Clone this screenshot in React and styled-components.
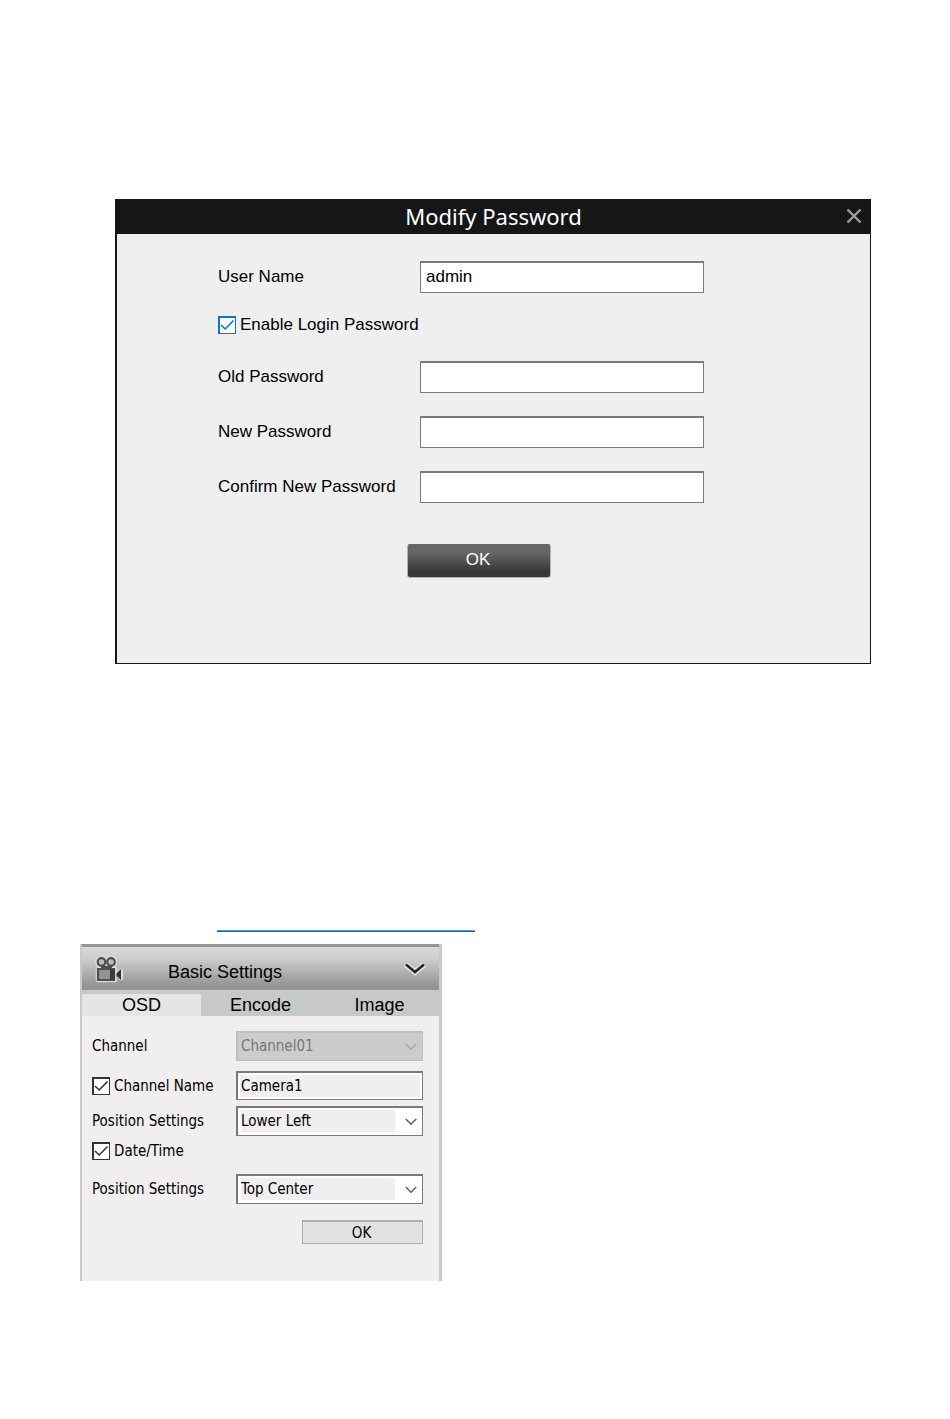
import React from "react";
import styled, { createGlobalStyle } from "styled-components";

const GlobalStyle = createGlobalStyle`
  * {
    box-sizing: border-box;
  }

  body {
    margin: 0;
    background: #fff;
    color: #000;
    font-family: "Liberation Sans", Arial, sans-serif;
  }

  button, input, select {
    margin: 0;
    border-radius: 0;
    font: inherit;
    color: inherit;
  }
`;

const Page = styled.main`
  padding: 199px 79px 137px 80px;
`;

const Dialog = styled.section`
  margin-left: 35px;
  border: 1px solid #161618;
  border-left-width: 2px;
  border-top: 0;
  background: #efefef;
  font-size: 17px;
`;

const DialogHeader = styled.header`
  display: grid;
  grid-template-columns: 32px 1fr 32px;
  align-items: center;
  height: 35px;
  padding-bottom: 2px;
  background: #161618;
`;

const DialogTitle = styled.h1`
  grid-column: 2;
  margin: 0;
  color: #fff;
  font: 400 22px/32px "Noto Sans", sans-serif;
  text-align: center;
`;

const CloseButton = styled.button`
  display: flex;
  justify-content: center;
  padding: 0;
  border: 0;
  background: none;
  color: #a0a0a0;
  cursor: pointer;
`;

const PasswordForm = styled.form`
  display: flex;
  flex-direction: column;
  gap: 23px;
  padding: 27px 101px 85px;
`;

const Field = styled.div`
  display: grid;
  grid-template-columns: 202px minmax(0, 284px);
  align-items: center;
`;

const TextInput = styled.input`
  width: 100%;
  height: 32px;
  padding: 0 5px 2px;
  border: 1px solid #7a7a7a;
  border-top-width: 2px;
  background: #fff;
  outline: none;
`;

const CheckLabel = styled.label`
  display: flex;
  align-items: center;
  gap: 4px;
  color: ${props => props.$accent || "#333"};
  margin-bottom: ${props => (props.$accent ? "4px" : "0")};

  & > b {
    color: #000;
    font-weight: 400;
    line-height: 18px;
  }
`;

const CheckBox = styled.span`
  position: relative;
  width: 18px;
  height: 18px;

  & > input {
    display: block;
    width: 18px;
    height: 18px;
    appearance: none;
    border: 2px solid currentColor;
    border-right-width: 1px;
    border-bottom-width: 1px;
    background: #fff;
  }

  & > svg {
    position: absolute;
    inset: 0;
    visibility: hidden;
    pointer-events: none;
  }

  & > input:checked + svg {
    visibility: visible;
  }
`;

const SubmitButton = styled.button`
  width: 144px;
  height: 34px;
  margin: 18px 0 0 189px;
  padding: 0 2px 2px 0;
  border: 1px solid #b4b4b4;
  border-top-color: #6a6a6a;
  border-radius: 3px;
  background: linear-gradient(#666 25%, #383838 80%);
  color: #fff;
  cursor: pointer;
`;

const Divider = styled.hr`
  width: 258px;
  height: 2px;
  margin: 266px 0 12px 137px;
  border: 0;
  border-top: 1px solid #5b9bdc;
  background: #0563c1;
`;

const Panel = styled.section`
  max-width: 362px;
  border: solid #c8c9c9;
  border-width: 0 3px 0 2px;
  background: #f0eeef;
  font-family: "DejaVu Sans Condensed", "DejaVu Sans", sans-serif;
  font-size: 15px;
`;

const PanelHeader = styled.header`
  display: flex;
  align-items: center;
  height: 46px;
  padding: 0 12px 0 13px;
  border-top: 3px solid #949494;
  background: linear-gradient(#d8d8d8, #cfcfcf 25%, #949494 90%);
  font-family: "Liberation Sans", Arial, sans-serif;
`;

const PanelTitle = styled.h2`
  flex: 1;
  margin: 8px 0 0 43px;
  font-size: 18px;
  font-weight: 400;
`;

const ToggleButton = styled.button`
  display: flex;
  padding: 0;
  border: 0;
  background: none;
  cursor: pointer;
`;

const Tabs = styled.div`
  display: grid;
  grid-template-columns: repeat(3, 1fr);
  padding-top: 4px;
  background: #c6c9c8;
  font-family: "Liberation Sans", Arial, sans-serif;
`;

const Tab = styled.button`
  height: 22px;
  padding: 0;
  border: 0;
  background: ${props => (props.$active ? "#e5e5e5" : "transparent")};
  font-size: 18px;
  line-height: 22px;
  cursor: pointer;
`;

const Settings = styled.form`
  padding: 15px 16px 37px 10px;
`;

const SettingRow = styled.div`
  display: grid;
  grid-template-columns: 144px minmax(0, 1fr);
  align-items: center;
  margin-bottom: ${props => props.$gap}px;
`;

const NameInput = styled.input`
  width: 100%;
  height: 29px;
  padding: 0 3px;
  border: 1px solid #7a7a7a;
  border-top-width: 2px;
  border-left-width: 2px;
  background: #f0eeef;
  box-shadow: inset 0 0 0 2px #fff;
  outline: none;
`;

const SelectBox = styled.div`
  position: relative;
  color: #606060;

  & > select {
    display: block;
    width: 100%;
    height: 30px;
    padding: 0 28px 2px 3px;
    appearance: none;
    border: 1px solid #7a7a7a;
    border-top-width: 2px;
    border-left-width: 2px;
    background: linear-gradient(#f0eeef, #f0eeef) 3px 2px / calc(100% - 30px) 22px no-repeat #fff;
    color: #000;
    outline: none;
  }

  & > select:disabled {
    border-color: #bfbfbf;
    background: #ccc;
    color: #777;
    opacity: 1;
  }

  & > select:disabled + svg {
    color: #a6a6a6;
  }

  & > svg {
    position: absolute;
    top: 12px;
    right: 6px;
    pointer-events: none;
  }
`;

const ApplyButton = styled.button`
  display: block;
  width: 121px;
  height: 24px;
  margin-left: auto;
  padding: 0 2px 0 0;
  border: 1px solid #adadad;
  border-top-width: 2px;
  background: #e1e1e1;
  cursor: pointer;
`;

const CloseIcon = () => (
    <svg width="16" height="16" viewBox="0 0 16 16" fill="none" stroke="currentColor" strokeWidth="2.4">
        <path d="M1.5 1.5 14.5 14.5M14.5 1.5 1.5 14.5" />
    </svg>
);

const CheckIcon = () => (
    <svg width="18" height="18" viewBox="0 0 18 18" fill="none" stroke="currentColor" strokeWidth="1.6">
        <path d="M3 9 7.2 13 15.5 4.5" />
    </svg>
);

const SelectArrow = () => (
    <svg width="12" height="8" viewBox="0 0 12 8" fill="none" stroke="currentColor" strokeWidth="1.5">
        <path d="M.8 1 6 6.2 11.2 1" />
    </svg>
);

const PanelArrow = () => (
    <svg width="24" height="16" viewBox="0 0 24 16" fill="none">
        <path d="M2.5 3.5 12 11 21.5 3.5" stroke="#e2e2e2" strokeWidth="6" />
        <path d="M3 3.5 12 11 21 3.5" stroke="#252525" strokeWidth="2.6" />
    </svg>
);

const CameraIcon = () => (
    <svg width="30" height="28" viewBox="0 0 30 28" fill="none">
        <g stroke="#dcdcdc" strokeWidth="4.5" strokeLinejoin="round">
            <circle cx="6.5" cy="7" r="4" />
            <circle cx="16" cy="7" r="4" />
            <path d="M3 14h17v11H3zM24 19l2-3v7z" />
        </g>
        <g stroke="#505050" strokeWidth="2.2">
            <circle cx="6.5" cy="7" r="3.8" fill="#bdbdbd" />
            <circle cx="16" cy="7" r="3.8" fill="#bdbdbd" />
            <path d="M3 14h16v11H3z" fill="#939393" />
            <path d="M6 12h11" />
        </g>
        <path d="M15 14h5v11h-5z" fill="#413936" />
        <path d="M21 18h1v4h-1z" fill="#4f9cb8" />
        <path d="M22 18 26 14v11l-4-4z" fill="#26363d" />
    </svg>
);

const Check = ({ id, accent, children }) => (
    <CheckLabel htmlFor={id} $accent={accent}>
        <CheckBox>
            <input id={id} type="checkbox" defaultChecked />
            <CheckIcon />
        </CheckBox>
        <b>{children}</b>
    </CheckLabel>
);

const Select = ({ options, ...props }) => (
    <SelectBox>
        <select {...props}>
            {options.map(option => <option key={option}>{option}</option>)}
        </select>
        <SelectArrow />
    </SelectBox>
);

const PasswordDialog = () => (
    <Dialog aria-labelledby="dialog-title">
        <DialogHeader>
            <DialogTitle id="dialog-title">Modify Password</DialogTitle>
            <CloseButton type="button" aria-label="Close"><CloseIcon /></CloseButton>
        </DialogHeader>
        <PasswordForm onSubmit={e => e.preventDefault()}>
            <Field>
                <label htmlFor="user">User Name</label>
                <TextInput id="user" defaultValue="admin" />
            </Field>
            <Check id="enable-login" accent="#0078d7">Enable Login Password</Check>
            <Field>
                <label htmlFor="old-password">Old Password</label>
                <TextInput id="old-password" type="password" />
            </Field>
            <Field>
                <label htmlFor="new-password">New Password</label>
                <TextInput id="new-password" type="password" />
            </Field>
            <Field>
                <label htmlFor="confirm-password">Confirm New Password</label>
                <TextInput id="confirm-password" type="password" />
            </Field>
            <SubmitButton type="submit">OK</SubmitButton>
        </PasswordForm>
    </Dialog>
);

const BasicSettings = () => (
    <Panel aria-labelledby="panel-title">
        <PanelHeader>
            <CameraIcon />
            <PanelTitle id="panel-title">Basic Settings</PanelTitle>
            <ToggleButton type="button" aria-label="Collapse"><PanelArrow /></ToggleButton>
        </PanelHeader>
        <Tabs role="tablist">
            <Tab type="button" role="tab" aria-selected="true" $active>OSD</Tab>
            <Tab type="button" role="tab" aria-selected="false">Encode</Tab>
            <Tab type="button" role="tab" aria-selected="false">Image</Tab>
        </Tabs>
        <Settings onSubmit={e => e.preventDefault()}>
            <SettingRow $gap={10}>
                <label htmlFor="channel">Channel</label>
                <Select id="channel" options={["Channel01"]} disabled />
            </SettingRow>
            <SettingRow $gap={6}>
                <Check id="show-name">Channel Name</Check>
                <NameInput aria-label="Channel Name" defaultValue="Camera1" />
            </SettingRow>
            <SettingRow $gap={6}>
                <label htmlFor="name-position">Position Settings</label>
                <Select id="name-position" options={["Lower Left", "Top Center"]} />
            </SettingRow>
            <SettingRow $gap={14}>
                <Check id="show-date">Date/Time</Check>
            </SettingRow>
            <SettingRow $gap={16}>
                <label htmlFor="date-position">Position Settings</label>
                <Select id="date-position" options={["Top Center", "Lower Left"]} />
            </SettingRow>
            <ApplyButton type="submit">OK</ApplyButton>
        </Settings>
    </Panel>
);

const App = () => (
    <Page>
        <GlobalStyle />
        <PasswordDialog />
        <Divider />
        <BasicSettings />
    </Page>
);

export default App;
